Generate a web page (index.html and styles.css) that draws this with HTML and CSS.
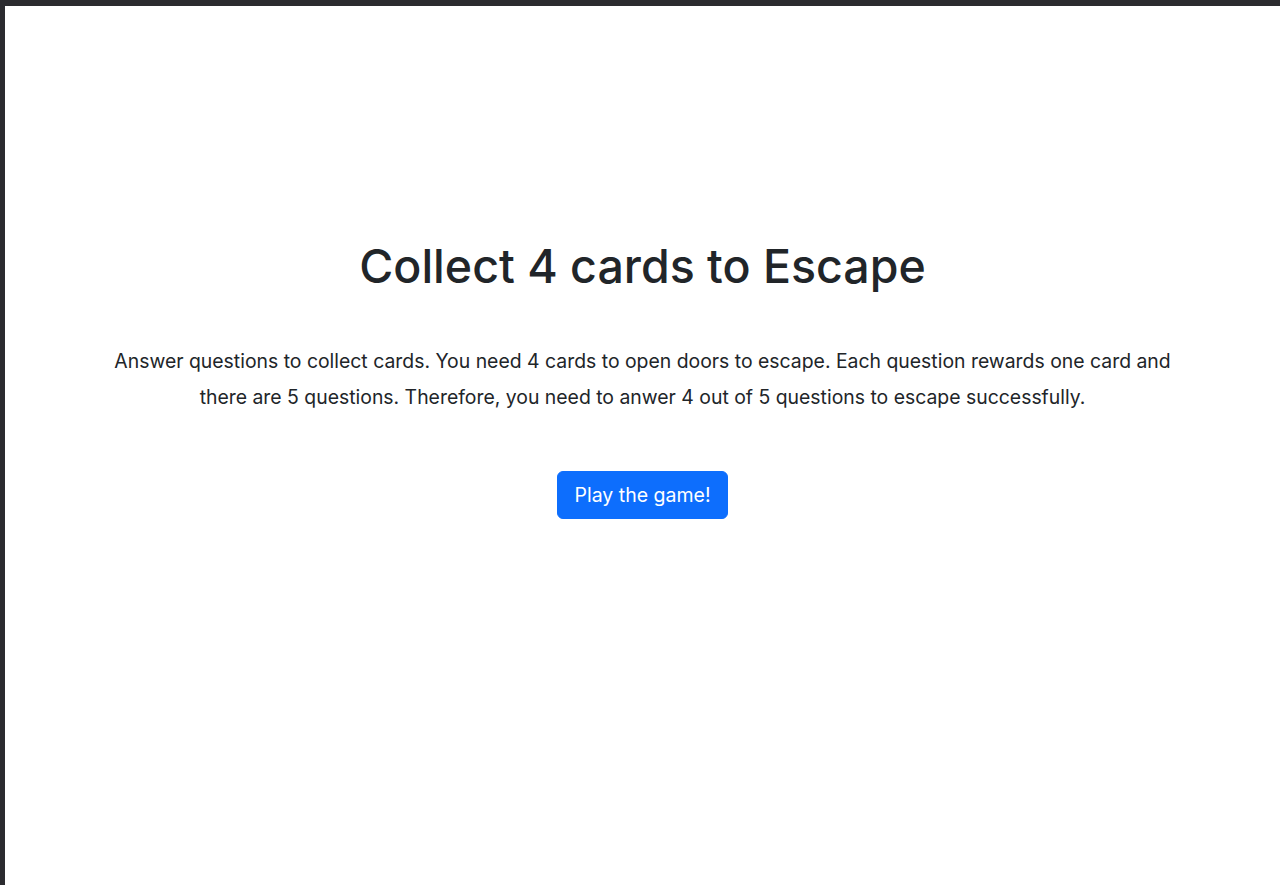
FILE: index.html
```html
<html>
    <head>
        <link rel="stylesheet" href="styles.css">
    </head>
    <body>
        <div class="frame">
            <div class="intro">
                <h1>Collect 4 cards to Escape</h1>
                <p>Answer questions to collect cards. You need 4 cards to open doors to escape. Each question rewards one card and there are 5 questions. Therefore, you need to anwer 4 out of 5 questions to escape successfully.</p>
                <a href="#" class="button">Play the game!</a>
            </div>
        </div>
    </body>
</html>
```

FILE: styles.css
```css
html, body {
    margin: 0;
    padding: 0;
    background: #2b2b2f;
    font-family: Inter, "Liberation Sans", Arial, sans-serif;
    color: #212529;
}
.frame {
    background: #fff;
    margin: 6px 0 0 5px;
    height: 879px;
    box-sizing: border-box;
}
.intro {
    max-width: 1080px;
    margin: 0 auto;
    padding-top: 233px;
    text-align: center;
}
h1 {
    margin: 0 0 48px 0;
    font-size: 46.5px;
    font-weight: 500;
    line-height: 1.2;
}
p {
    margin: 0 0 56px 0;
    font-size: 19.4px;
    line-height: 36px;
}
.button {
    display: inline-block;
    color: #fff;
    background: #0d6efd;
    border: 1px solid #0d6efd;
    border-radius: 6px;
    padding: 8px 16px;
    font-size: 19.5px;
    line-height: 30px;
    text-decoration: none;
}
```
